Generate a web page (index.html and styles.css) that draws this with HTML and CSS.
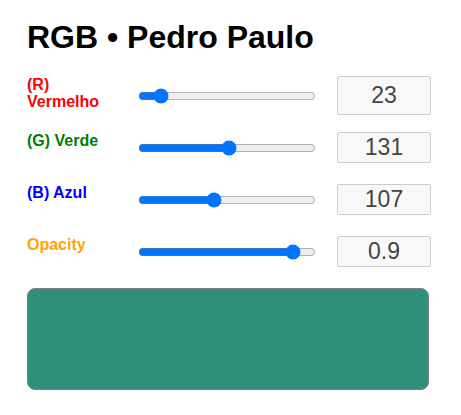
FILE: index.html
```html
<!DOCTYPE html>
<html lang="pt">
<head>
<meta charset="utf-8">
<title>RGB • Pedro Paulo</title>
<link rel="stylesheet" href="styles.css">
</head>
<body>
<main class="app">
  <h1 class="title">RGB • Pedro Paulo</h1>
  <div class="row">
    <label class="label red">(R) Vermelho</label>
    <input class="slider" type="range" min="0" max="255" value="23">
    <div class="value">23</div>
  </div>
  <div class="row">
    <label class="label green">(G) Verde</label>
    <input class="slider" type="range" min="0" max="255" value="131">
    <div class="value">131</div>
  </div>
  <div class="row">
    <label class="label blue">(B) Azul</label>
    <input class="slider" type="range" min="0" max="255" value="107">
    <div class="value">107</div>
  </div>
  <div class="row">
    <label class="label orange">Opacity</label>
    <input class="slider" type="range" min="0" max="1" step="0.01" value="0.91">
    <div class="value">0.9</div>
  </div>
  <div class="preview" style="background-color: rgba(23, 131, 107, 0.9);"></div>
</main>
</body>
</html>
```
FILE: styles.css
```css
html, body {
  margin: 0;
  padding: 0;
  background: #ffffff;
}

body {
  font-family: "Liberation Sans", Arial, sans-serif;
}

.app {
  padding: 19px 0 0 27px;
  width: 404px;
}

.title {
  margin: 0 0 20px 0;
  font-size: 32px;
  font-weight: bold;
  line-height: 37px;
  color: #000;
}

.row {
  display: flex;
  align-items: stretch;
  margin-bottom: 21px;
}

.row:first-of-type {
  margin-bottom: 17px;
}

.label {
  width: 86px;
  padding-bottom: 5px;
  font-size: 16px;
  font-weight: bold;
  line-height: 17px;
}

.red { color: #ff0000; }
.green { color: #008000; }
.blue { color: #0000ff; }
.orange { color: #ffa500; }

.slider {
  width: 178px;
  margin: 0 21px 0 25px;
  align-self: center;
}

.value {
  width: 92px;
  min-height: 29px;
  border: 1px solid #cccccc;
  border-radius: 2px;
  background: #f8f8f8;
  color: #444444;
  font-size: 23px;
  display: flex;
  align-items: center;
  justify-content: center;
}

.preview {
  margin-top: 20px;
  width: 400px;
  height: 100px;
  border: 1px solid #808080;
  border-radius: 8px;
}
```
